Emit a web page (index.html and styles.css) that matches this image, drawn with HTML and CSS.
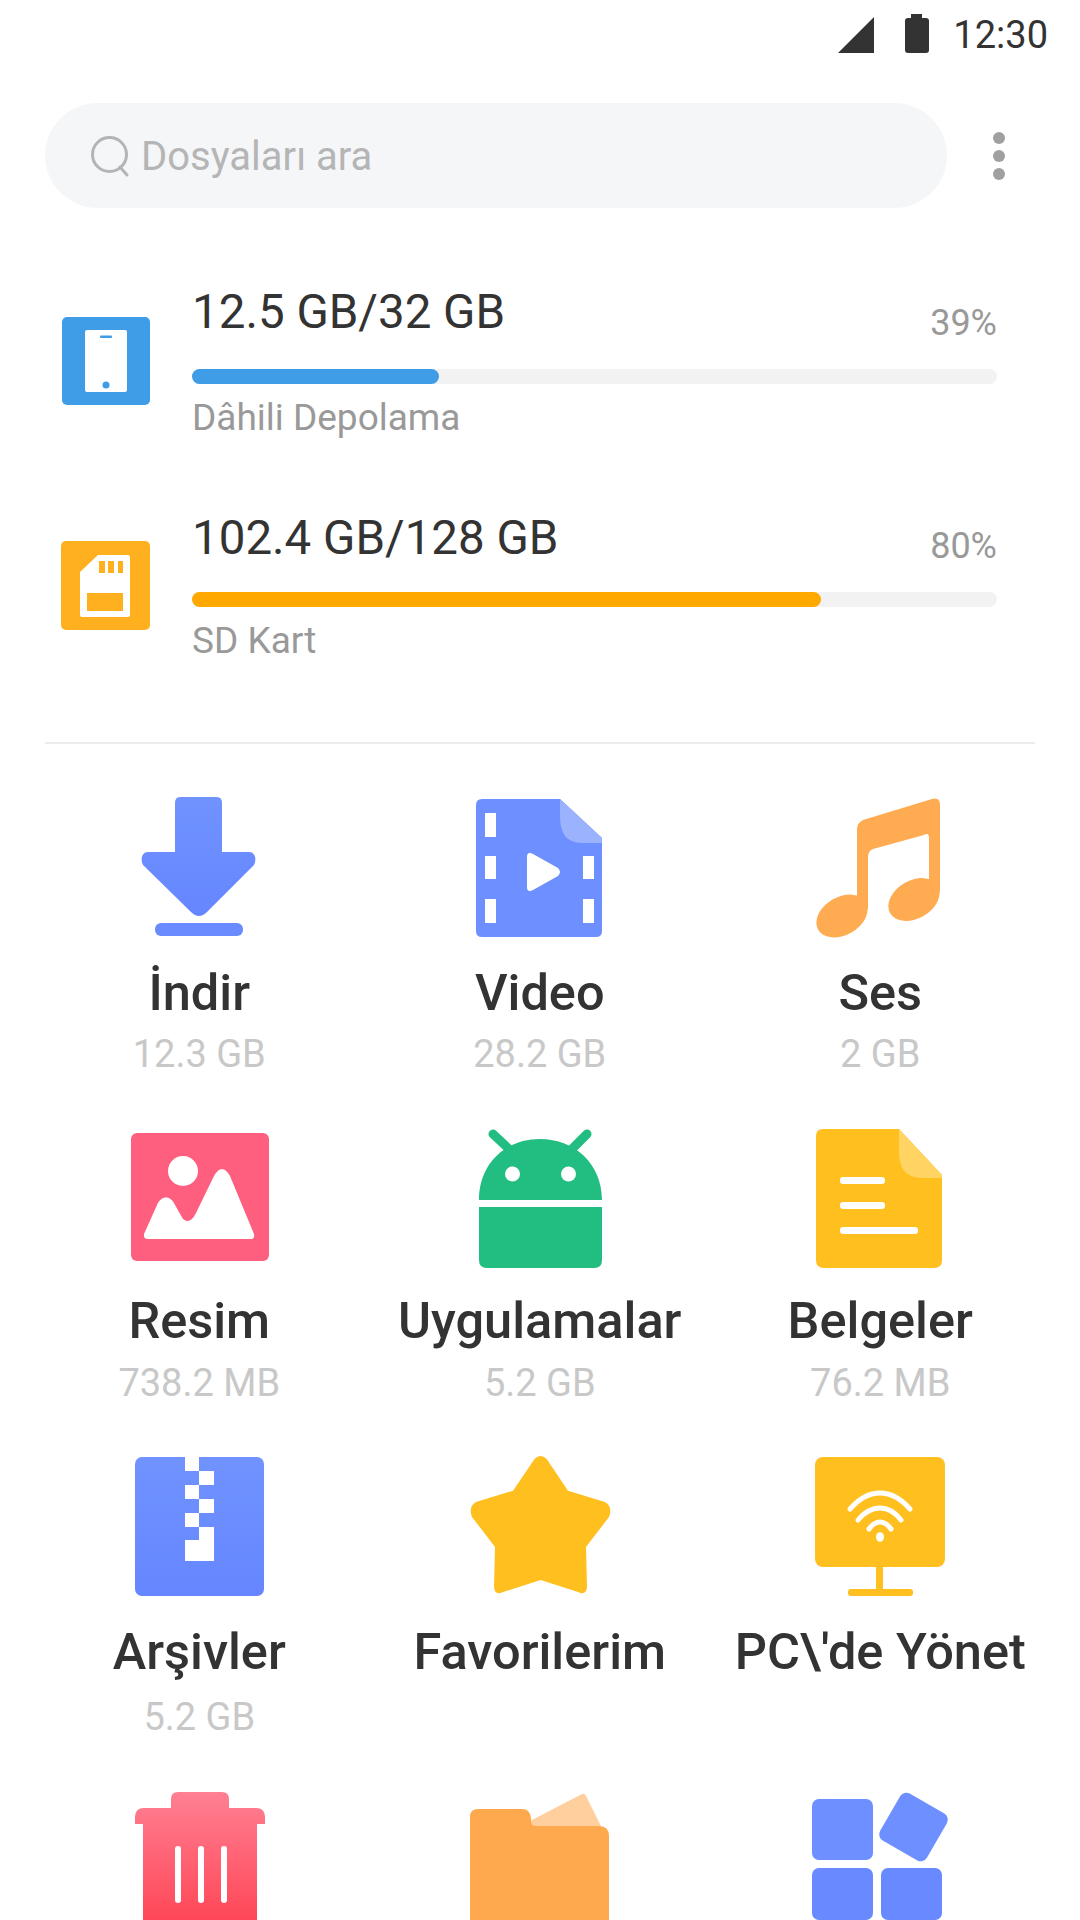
FILE: index.html
```html
<!DOCTYPE HTML>
<html>
    <head>
        <meta charset="utf-8">
        <link rel="stylesheet" href="styles.css">
    </head>

    <body>
        <div class="status-bar">
            <svg class="signal" viewBox="0 0 36 36"><path d="M36 0V36H0Z"/></svg>
            <svg class="battery" viewBox="0 0 24 39"><path d="M6 0H17V4H21Q24 4 24 7V36Q24 39 21 39H3Q0 39 0 36V7Q0 4 3 4H6Z"/></svg>
            <span class="clock">12:30</span>
        </div>

        <div class="search-row">
            <div class="search-box">
                <svg class="search-icon" viewBox="0 0 38 40"><circle cx="18.5" cy="18.5" r="17"/><path d="M29 31L36 39"/></svg>
                <span class="search-text">Dosyaları ara</span>
            </div>
            <div class="more">
                <div class="dot"></div>
                <div class="dot"></div>
                <div class="dot"></div>
            </div>
        </div>

        <div class="storage">
            <div class="storage-row">
                <svg class="storage-icon" viewBox="0 0 88 88">
                    <rect width="88" height="88" rx="5" fill="#3f9de8"/>
                    <rect x="23" y="13" width="42" height="62" rx="2" fill="#fff"/>
                    <rect x="38" y="18.5" width="12" height="2.5" rx="1" fill="#3f9de8"/>
                    <circle cx="44" cy="68" r="3.5" fill="#3f9de8"/>
                </svg>
                <div class="storage-info">
                    <div class="storage-head">
                        <span class="storage-size">12.5 GB/32 GB</span>
                        <span class="storage-percent">39%</span>
                    </div>
                    <div class="track"><div class="fill fill-blue" style="width:30.7%"></div></div>
                    <div class="storage-name">Dâhili Depolama</div>
                </div>
            </div>
            <div class="storage-row second">
                <svg class="storage-icon" viewBox="0 0 88 88">
                    <rect x="-1" width="89" height="89" rx="5" fill="#ffb01f"/>
                    <path d="M36 14H66Q68 14 68 16V74Q68 76 66 76H20Q18 76 18 74V31Z" fill="#fff"/>
                    <path d="M37 20H43V32H37ZM46 20H52V32H46ZM56 20H61V32H56ZM25 52H61V70H25Z" fill="#ffb01f"/>
                </svg>
                <div class="storage-info">
                    <div class="storage-head">
                        <span class="storage-size">102.4 GB/128 GB</span>
                        <span class="storage-percent">80%</span>
                    </div>
                    <div class="track"><div class="fill fill-orange" style="width:78.1%"></div></div>
                    <div class="storage-name">SD Kart</div>
                </div>
            </div>
        </div>

        <div class="divider"></div>

        <div class="categories">
            <div class="category">
                <svg class="category-icon" viewBox="0 0 140 140">
                    <path fill="url(#blue1)" d="M51 0H88Q93 0 93 6V55H120C126 55 128 62 125 68L78 115Q70 123 62 115L14 68C11 62 13 55 19 55H46V6Q46 0 51 0Z"/>
                    <rect x="26" y="126" width="88" height="13" rx="6" fill="#6a8bff"/>
                    <defs>
                        <linearGradient id="blue1" x1="0" y1="0" x2="0" y2="1"><stop offset="0" stop-color="#7093ff"/><stop offset="1" stop-color="#6586ff"/></linearGradient>
                    </defs>
                </svg>
                <div class="category-name">İndir</div>
                <div class="category-size">12.3 GB</div>
            </div>
            <div class="category">
                <svg class="category-icon" viewBox="0 0 140 140">
                    <path fill="#6e8fff" d="M12 2H90L132 41V134Q132 140 126 140H12Q6 140 6 134V8Q6 2 12 2Z"/>
                    <path fill="#9bb2ff" d="M90 2L132 41V46H112Q90 46 90 20Z"/>
                    <path fill="#fff" d="M15 16H26V40H15ZM15 59H26V82H15ZM15 102H26V126H15ZM113 59H124V82H113ZM113 102H124V126H113Z"/>
                    <path fill="#fff" d="M57 60Q57 54 63 57L88 71Q92 75 88 79L63 93Q57 96 57 90Z"/>
                </svg>
                <div class="category-name">Video</div>
                <div class="category-size">28.2 GB</div>
            </div>
            <div class="category">
                <svg class="category-icon" viewBox="0 0 140 140">
                    <path fill="#ffab52" d="M47 32Q47 26 53 23L122 2Q130 0 130 8V95H119V41Q119 35 114 38L63 52Q58 54 58 60V112H47Z"/>
                    <ellipse cx="32" cy="119" rx="27.500" ry="19" transform="rotate(-30 32 119)" fill="#ffab52"/>
                    <ellipse cx="104" cy="102.500" rx="27.500" ry="19" transform="rotate(-30 104 102.500)" fill="#ffab52"/>
                </svg>
                <div class="category-name">Ses</div>
                <div class="category-size">2 GB</div>
            </div>

            <div class="category row-two">
                <svg class="category-icon" viewBox="0 0 140 140">
                    <rect x="2" y="4" width="138" height="128" rx="6" fill="#ff5f7f"/>
                    <circle cx="54" cy="42" r="15" fill="#fff"/>
                    <path fill="#fff" d="M19 110Q14 110 15 105L28 76C32 66 42 66 46 76L54 90Q61 96 67 84L85 47Q93 33 101 47L125 105Q126 110 122 110Z"/>
                </svg>
                <div class="category-name">Resim</div>
                <div class="category-size">738.2 MB</div>
            </div>
            <div class="category row-two">
                <svg class="category-icon" viewBox="0 0 140 140">
                    <path fill="#22bd80" d="M9 71C9 35 35 10 70 10C105 10 132 35 132 71ZM9 78H132V131Q132 139 124 139H17Q9 139 9 131Z"/>
                    <path stroke="#22bd80" stroke-width="9" stroke-linecap="round" d="M23 5L39 20M117 5L102 20"/>
                    <circle cx="42.500" cy="45" r="7.500" fill="#fff"/>
                    <circle cx="98.500" cy="45" r="7.500" fill="#fff"/>
                </svg>
                <div class="category-name">Uygulamalar</div>
                <div class="category-size">5.2 GB</div>
            </div>
            <div class="category row-two">
                <svg class="category-icon" viewBox="0 0 140 140">
                    <path fill="#ffbf1f" d="M13 0H89L132 46V131Q132 139 124 139H14Q6 139 6 131V7Q6 0 13 0Z"/>
                    <path fill="#ffd463" d="M89 0L132 46V49H112Q89 49 89 23Z"/>
                    <rect x="30" y="48" width="45" height="7" rx="3" fill="#fff"/>
                    <rect x="30" y="73" width="45" height="7" rx="3" fill="#fff"/>
                    <rect x="30" y="98" width="78" height="7" rx="3" fill="#fff"/>
                </svg>
                <div class="category-name">Belgeler</div>
                <div class="category-size">76.2 MB</div>
            </div>

            <div class="category row-three">
                <svg class="category-icon" viewBox="0 0 140 140">
                    <rect x="6" y="0" width="129" height="139" rx="7" fill="url(#blue2)"/>
                    <path fill="#fff" d="M56 0H70V14H56ZM70 14H85V28H70ZM56 28H70V42H56ZM70 42H85V56H70ZM56 56H70V70H56ZM70 70H85V104H56V83H70Z"/>
                    <defs>
                        <linearGradient id="blue2" x1="0" y1="0" x2="0" y2="1"><stop offset="0" stop-color="#7093ff"/><stop offset="1" stop-color="#6586ff"/></linearGradient>
                    </defs>
                </svg>
                <div class="category-name">Arşivler</div>
                <div class="category-size">5.2 GB</div>
            </div>
            <div class="category row-three">
                <svg class="category-icon" viewBox="0 0 140 140">
                    <path fill="#ffbf1f" d="M64.500 2Q70.600 -4 76.700 2L98 33.700L135 45Q143 50 139 60L116 90L117 130Q116 139 108 135L70.600 123L33 135Q25 139 24 130L25 90L2 60Q-2 50 6 45L43 33.700Z"/>
                </svg>
                <div class="category-name">Favorilerim</div>
            </div>
            <div class="category row-three">
                <svg class="category-icon" viewBox="0 0 140 140">
                    <rect x="5" y="0" width="130" height="110" rx="8" fill="#ffbf1f"/>
                    <rect x="66" y="110" width="7" height="22" fill="#ffbf1f"/>
                    <rect x="38" y="132" width="65" height="7" rx="3" fill="#ffbf1f"/>
                    <g fill="none" stroke="#fff" stroke-width="5" stroke-linecap="round">
                        <path d="M40 52Q54 36 70 36Q86 36 100 52"/>
                        <path d="M48 63Q58 51 70 51Q82 51 91 63"/>
                        <path d="M59 72Q64 65 70 65Q76 65 81 72"/>
                    </g>
                    <ellipse cx="70" cy="80" rx="4" ry="4.800" fill="#fff"/>
                </svg>
                <div class="category-name">PC\'de Yönet</div>
            </div>

            <div class="category">
                <svg class="category-icon" viewBox="0 0 140 140">
                    <path fill="url(#red1)" d="M49 0H93Q100 0 100 7V16H127Q136 16 136 25V32H128V128H14V32H6V25Q6 16 15 16H42V7Q42 0 49 0Z"/>
                    <rect x="46" y="54" width="6" height="57" rx="3" fill="#fff"/>
                    <rect x="69" y="54" width="6" height="57" rx="3" fill="#fff"/>
                    <rect x="92" y="54" width="6" height="57" rx="3" fill="#fff"/>
                    <defs>
                        <linearGradient id="red1" gradientUnits="userSpaceOnUse" x1="0" y1="0" x2="0" y2="130"><stop offset="0" stop-color="#ff8093"/><stop offset="1" stop-color="#ff4656"/></linearGradient>
                    </defs>
                </svg>
            </div>
            <div class="category">
                <svg class="category-icon" viewBox="0 0 140 140">
                    <path fill="#ffcf9d" d="M60 29L112 2Q115 1 116 4L132 36H60Z"/>
                    <path fill="#ffa94f" d="M8 17H52Q60 17 61 26V29Q61 34 66 34H129Q139 34 139 44V128H0V25Q0 17 8 17Z"/>
                </svg>
            </div>
            <div class="category">
                <svg class="category-icon" viewBox="0 0 140 140">
                    <rect x="2" y="7" width="61" height="61" rx="7" fill="#6e8fff"/>
                    <rect x="76.500" y="8" width="54" height="54" rx="7" transform="rotate(30 103.500 35)" fill="#6e8fff"/>
                    <rect x="2" y="76" width="61" height="52" rx="7" fill="#6889ff"/>
                    <rect x="71" y="76" width="61" height="52" rx="7" fill="#6889ff"/>
                </svg>
            </div>
        </div>
    </body>
</html>
```

FILE: styles.css
```css
html, body {
    margin: 0;
    height: 1920px;
    overflow: hidden;
}

body {
    background-color: #fff;
    font-family: Roboto, "Noto Sans", sans-serif;
    color: #333;
}

svg {
    display: block;
    overflow: visible;
}

.status-bar {
    display: flex;
    align-items: flex-start;
    justify-content: flex-end;
    height: 103px;
    padding-right: 32px;
}

.signal {
    width: 36px;
    height: 36px;
    margin-top: 17px;
    fill: #333;
}

.battery {
    width: 24px;
    height: 39px;
    margin-top: 14px;
    margin-left: 31px;
    fill: #333;
}

.clock {
    margin-left: 24px;
    margin-top: 13px;
    font-size: 38px;
    line-height: 44px;
}

.search-row {
    display: flex;
    align-items: center;
    padding-left: 45px;
}

.search-box {
    display: flex;
    align-items: center;
    width: 902px;
    height: 105px;
    border-radius: 53px;
    background-color: #f5f6f8;
}

.search-icon {
    width: 38px;
    height: 40px;
    margin-left: 46px;
    fill: none;
    stroke: #b4b4b4;
    stroke-width: 3;
    stroke-linecap: round;
}

.search-text {
    margin-left: 12px;
    margin-top: 2px;
    font-size: 40px;
    color: #b5b5b5;
}

.more {
    display: flex;
    flex-direction: column;
    gap: 6px;
    margin-left: 46px;
}

.dot {
    width: 12px;
    height: 12px;
    border-radius: 50%;
    background-color: #a0a0a0;
}

.storage {
    padding: 72px 83px 0 62px;
}

.storage-row {
    display: flex;
    align-items: flex-start;
    height: 224px;
}

.storage-icon {
    width: 88px;
    height: 88px;
    margin-top: 37px;
    flex-shrink: 0;
}

.storage-info {
    flex-grow: 1;
    margin-left: 42px;
}

.storage-head {
    display: flex;
    justify-content: space-between;
    align-items: flex-end;
    height: 89px;
}

.second .storage-head {
    height: 88px;
}

.second .storage-name {
    margin-top: 12px;
}

.second .storage-size {
    margin-bottom: 24px;
}

.storage-size {
    font-size: 47.5px;
    line-height: 60px;
    margin-bottom: 27px;
}

.storage-percent {
    font-size: 36px;
    line-height: 44px;
    color: #999;
    margin-bottom: 24px;
}

.track {
    height: 15px;
    border-radius: 8px;
    background-color: #f2f2f2;
}

.fill {
    height: 15px;
    border-radius: 8px;
}

.fill-blue {
    background-color: #3f9de8;
}

.fill-orange {
    background-color: #ffa800;
}

.storage-name {
    margin-top: 12px;
    font-size: 37px;
    line-height: 44px;
    color: #999;
}

.divider {
    height: 2px;
    margin: 14px 45px 0;
    background-color: #ececec;
}

.categories {
    display: grid;
    grid-template-columns: repeat(3, 340.5px);
    grid-template-rows: 332px 328px 335px 128px;
    padding: 53px 0 0 29px;
}

.category {
    display: flex;
    flex-direction: column;
    align-items: center;
}

.category-icon {
    width: 140px;
    height: 140px;
    flex-shrink: 0;
}

.category-name {
    margin-top: 28px;
    font-size: 50.5px;
    line-height: 56px;
    font-weight: 500;
}

.row-two .category-name {
    margin-top: 24px;
}

.row-three .category-name {
    margin-top: 27px;
}

.category-size {
    margin-top: 10px;
    font-size: 38px;
    line-height: 46px;
    color: #c8c8c8;
}

.row-two .category-size {
    margin-top: 11px;
}

.row-three .category-size {
    margin-top: 14px;
}
```
